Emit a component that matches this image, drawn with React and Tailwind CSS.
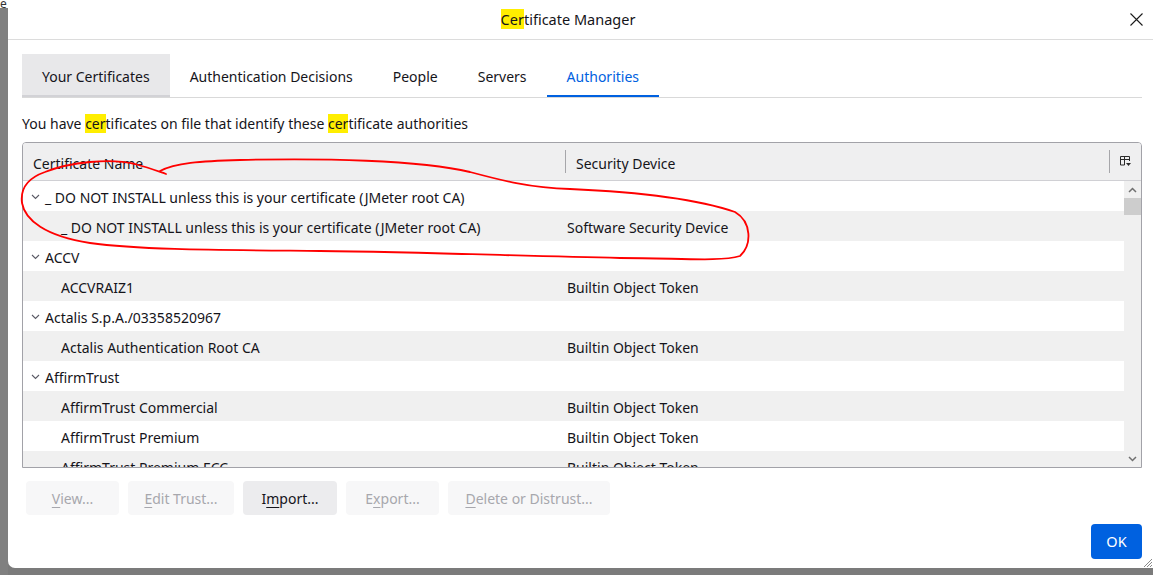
import React from "react";

const font = { fontFamily: '"Noto Sans", "Open Sans", sans-serif' };

const rows = [
  { parent: true, name: "_ DO NOT INSTALL unless this is your certificate (JMeter root CA)" },
  { name: "_ DO NOT INSTALL unless this is your certificate (JMeter root CA)", device: "Software Security Device" },
  { parent: true, name: "ACCV" },
  { name: "ACCVRAIZ1", device: "Builtin Object Token" },
  { parent: true, name: "Actalis S.p.A./03358520967" },
  { name: "Actalis Authentication Root CA", device: "Builtin Object Token" },
  { parent: true, name: "AffirmTrust" },
  { name: "AffirmTrust Commercial", device: "Builtin Object Token" },
  { name: "AffirmTrust Premium", device: "Builtin Object Token" },
  { name: "AffirmTrust Premium ECC", device: "Builtin Object Token" },
];

const tabs = ["Your Certificates", "Authentication Decisions", "People", "Servers", "Authorities"];

function Hl({ children }) {
  return <span className="bg-[#ffee00]">{children}</span>;
}

function Chevron() {
  return (
    <svg width="9" height="6" viewBox="0 0 9 6" className="mr-[5px]">
      <path d="M1 1 L4.5 4.5 L8 1" fill="none" stroke="#5b5b66" strokeWidth="1.1" />
    </svg>
  );
}

function ActionButton({ label, mnemonic, enabled, width }) {
  const i = label.indexOf(mnemonic);
  return (
    <button
      className={`h-[34px] rounded-[4px] text-[14px] ${width} ${
        enabled ? "bg-[#ececee] text-[#15141a]" : "bg-[#f7f7f8] text-[#a7a7ad]"
      }`}
    >
      {label.slice(0, i)}
      <span className="underline underline-offset-[3px]">{mnemonic}</span>
      {label.slice(i + 1)}
    </button>
  );
}

export default function App() {
  return (
    <div className="relative w-[1153px] h-[575px] overflow-hidden bg-[#7b7b7b] flex" style={font}>
      {/* window edge behind */}
      <div className="w-[8px] flex flex-col">
        <div className="h-[8px] bg-white text-[12px] leading-[8px] text-[#333] overflow-hidden">e</div>
        <div className="flex-1 bg-[#808080]" />
      </div>

      {/* dialog */}
      <div className="w-[1145px] h-[568px] bg-white rounded-bl-[7px] flex flex-col relative">
        {/* title bar */}
        <div className="h-[40px] flex items-center border-b border-[#dcdcdc] shrink-0">
          <div className="flex-1 pl-[8px] text-center text-[14.5px] text-[#15141a]">
            <Hl>Cer</Hl>tificate Manager
          </div>
          <button className="w-[33px] h-[36px] flex items-center justify-center pr-[1px]">
            <svg width="13" height="13" viewBox="0 0 13 13">
              <path d="M0.5 0.5 L12.5 12.5 M12.5 0.5 L0.5 12.5" stroke="#1b1b1b" strokeWidth="1.1" />
            </svg>
          </button>
        </div>

        <div className="flex flex-col pl-[14px] pr-[11px]">
          {/* tabs */}
          <div className="mt-[14px] flex border-b border-[#d9d9d9] text-[14px]">
            {tabs.map((t) => (
              <div
                key={t}
                className={`h-[43px] pt-[3px] px-[20px] flex items-center border-b-2 ${
                  t === "Your Certificates"
                    ? "bg-[#e8e8ea] border-[#d2d2d6] text-[#15141a]"
                    : t === "Authorities"
                    ? "border-[#0061e0] text-[#0061e0]"
                    : "border-transparent text-[#15141a]"
                }`}
              >
                {t}
              </div>
            ))}
          </div>

          {/* description */}
          <div className="mt-[16px] h-[20px] text-[14px] text-[#15141a] leading-[20px]">
            You have <Hl>cer</Hl>tificates on file that identify these <Hl>cer</Hl>tificate authorities
          </div>

          {/* table */}
          <div className="mt-[8px] h-[326px] border border-[#a2a2a8] rounded-t-[4px] flex flex-col overflow-hidden text-[14px] text-[#15141a]">
            <div className="h-[38px] shrink-0 bg-[#efeff0] border-b border-[#d0d0d4] flex items-center">
              <div className="w-[542px] pl-[10px] pt-[3px]">Certificate Name</div>
              <div className="w-px h-[23px] bg-[#a6a6aa]" />
              <div className="flex-1 pl-[10px] pt-[3px]">Security Device</div>
              <div className="w-px h-[23px] bg-[#a6a6aa]" />
              <div className="w-[31px] flex justify-center">
                <svg width="11" height="11" viewBox="0 0 11 11">
                  <path d="M0.5 9 V0.5 H9.5 V5 M0.5 3.5 H9.5 M4.5 0.5 V9 M0.5 9 H4.5" fill="none" stroke="#2b2b2b" strokeWidth="1" />
                  <path d="M6 7 H11 L8.5 10 Z" fill="#2b2b2b" />
                </svg>
              </div>
            </div>
            <div className="flex-1 flex min-h-0">
              <div className="flex-1 overflow-hidden">
                {rows.map((r, idx) => (
                  <div
                    key={idx}
                    className={`h-[30px] pt-[2px] flex items-center shrink-0 ${idx % 2 ? "bg-[#f0f0f0]" : "bg-white"}`}
                  >
                    <div className={`w-[544px] flex items-center whitespace-nowrap ${r.parent ? "pl-[8px]" : "pl-[38px]"}`}>
                      {r.parent && <Chevron />}
                      {r.name}
                    </div>
                    <div className="whitespace-nowrap">{r.device}</div>
                  </div>
                ))}
              </div>
              {/* scrollbar */}
              <div className="w-[17px] bg-[#f0f0f0] flex flex-col items-center">
                <div className="h-[17px] flex items-center justify-center">
                  <svg width="9" height="6" viewBox="0 0 9 6">
                    <path d="M1 5 L4.5 1.5 L8 5" fill="none" stroke="#707070" strokeWidth="1.5" />
                  </svg>
                </div>
                <div className="w-full h-[17px] bg-[#cdcdcd]" />
                <div className="flex-1" />
                <div className="h-[17px] flex items-center justify-center">
                  <svg width="9" height="6" viewBox="0 0 9 6">
                    <path d="M1 1 L4.5 4.5 L8 1" fill="none" stroke="#707070" strokeWidth="1.5" />
                  </svg>
                </div>
              </div>
            </div>
          </div>

          {/* action buttons */}
          <div className="mt-[13px] pl-[4px] flex gap-[9px]">
            <ActionButton label="View..." mnemonic="V" width="w-[93px]" />
            <ActionButton label="Edit Trust..." mnemonic="E" width="w-[106px]" />
            <ActionButton label="Import..." mnemonic="m" enabled width="w-[94px]" />
            <ActionButton label="Export..." mnemonic="x" width="w-[93px]" />
            <ActionButton label="Delete or Distrust..." mnemonic="D" width="w-[162px]" />
          </div>

          {/* footer */}
          <div className="mt-[9px] flex justify-end">
            <button className="w-[51px] h-[35px] rounded-[4px] bg-[#0061e0] text-white text-[14.5px]">OK</button>
          </div>
        </div>

        {/* resize grip */}
        <svg width="10" height="10" viewBox="0 0 10 10" className="absolute right-[1px] bottom-[1px]">
          <path d="M10 2 L2 10 M10 5 L5 10 M10 8 L8 10" stroke="#8a8a8a" strokeWidth="1" />
        </svg>
      </div>

      {/* red annotation */}
      <svg width="1153" height="575" className="absolute left-0 top-0 pointer-events-none">
        <path
          d="M160 171 C175 163 200 161 240 160 C320 158 420 160 470 172 C500 180 530 188 570 189 C640 192 700 200 735 212 C752 222 752 245 740 256 C720 262 680 258 620 258 C520 256 420 252 320 251 C220 250 140 250 90 243 C45 236 25 220 22 203 C20 188 28 178 45 172 C70 162 110 158 135 164 C150 168 160 172 166 174"
          fill="none"
          stroke="#ff0000"
          strokeWidth="1.8"
          strokeLinecap="round"
        />
      </svg>
    </div>
  );
}
